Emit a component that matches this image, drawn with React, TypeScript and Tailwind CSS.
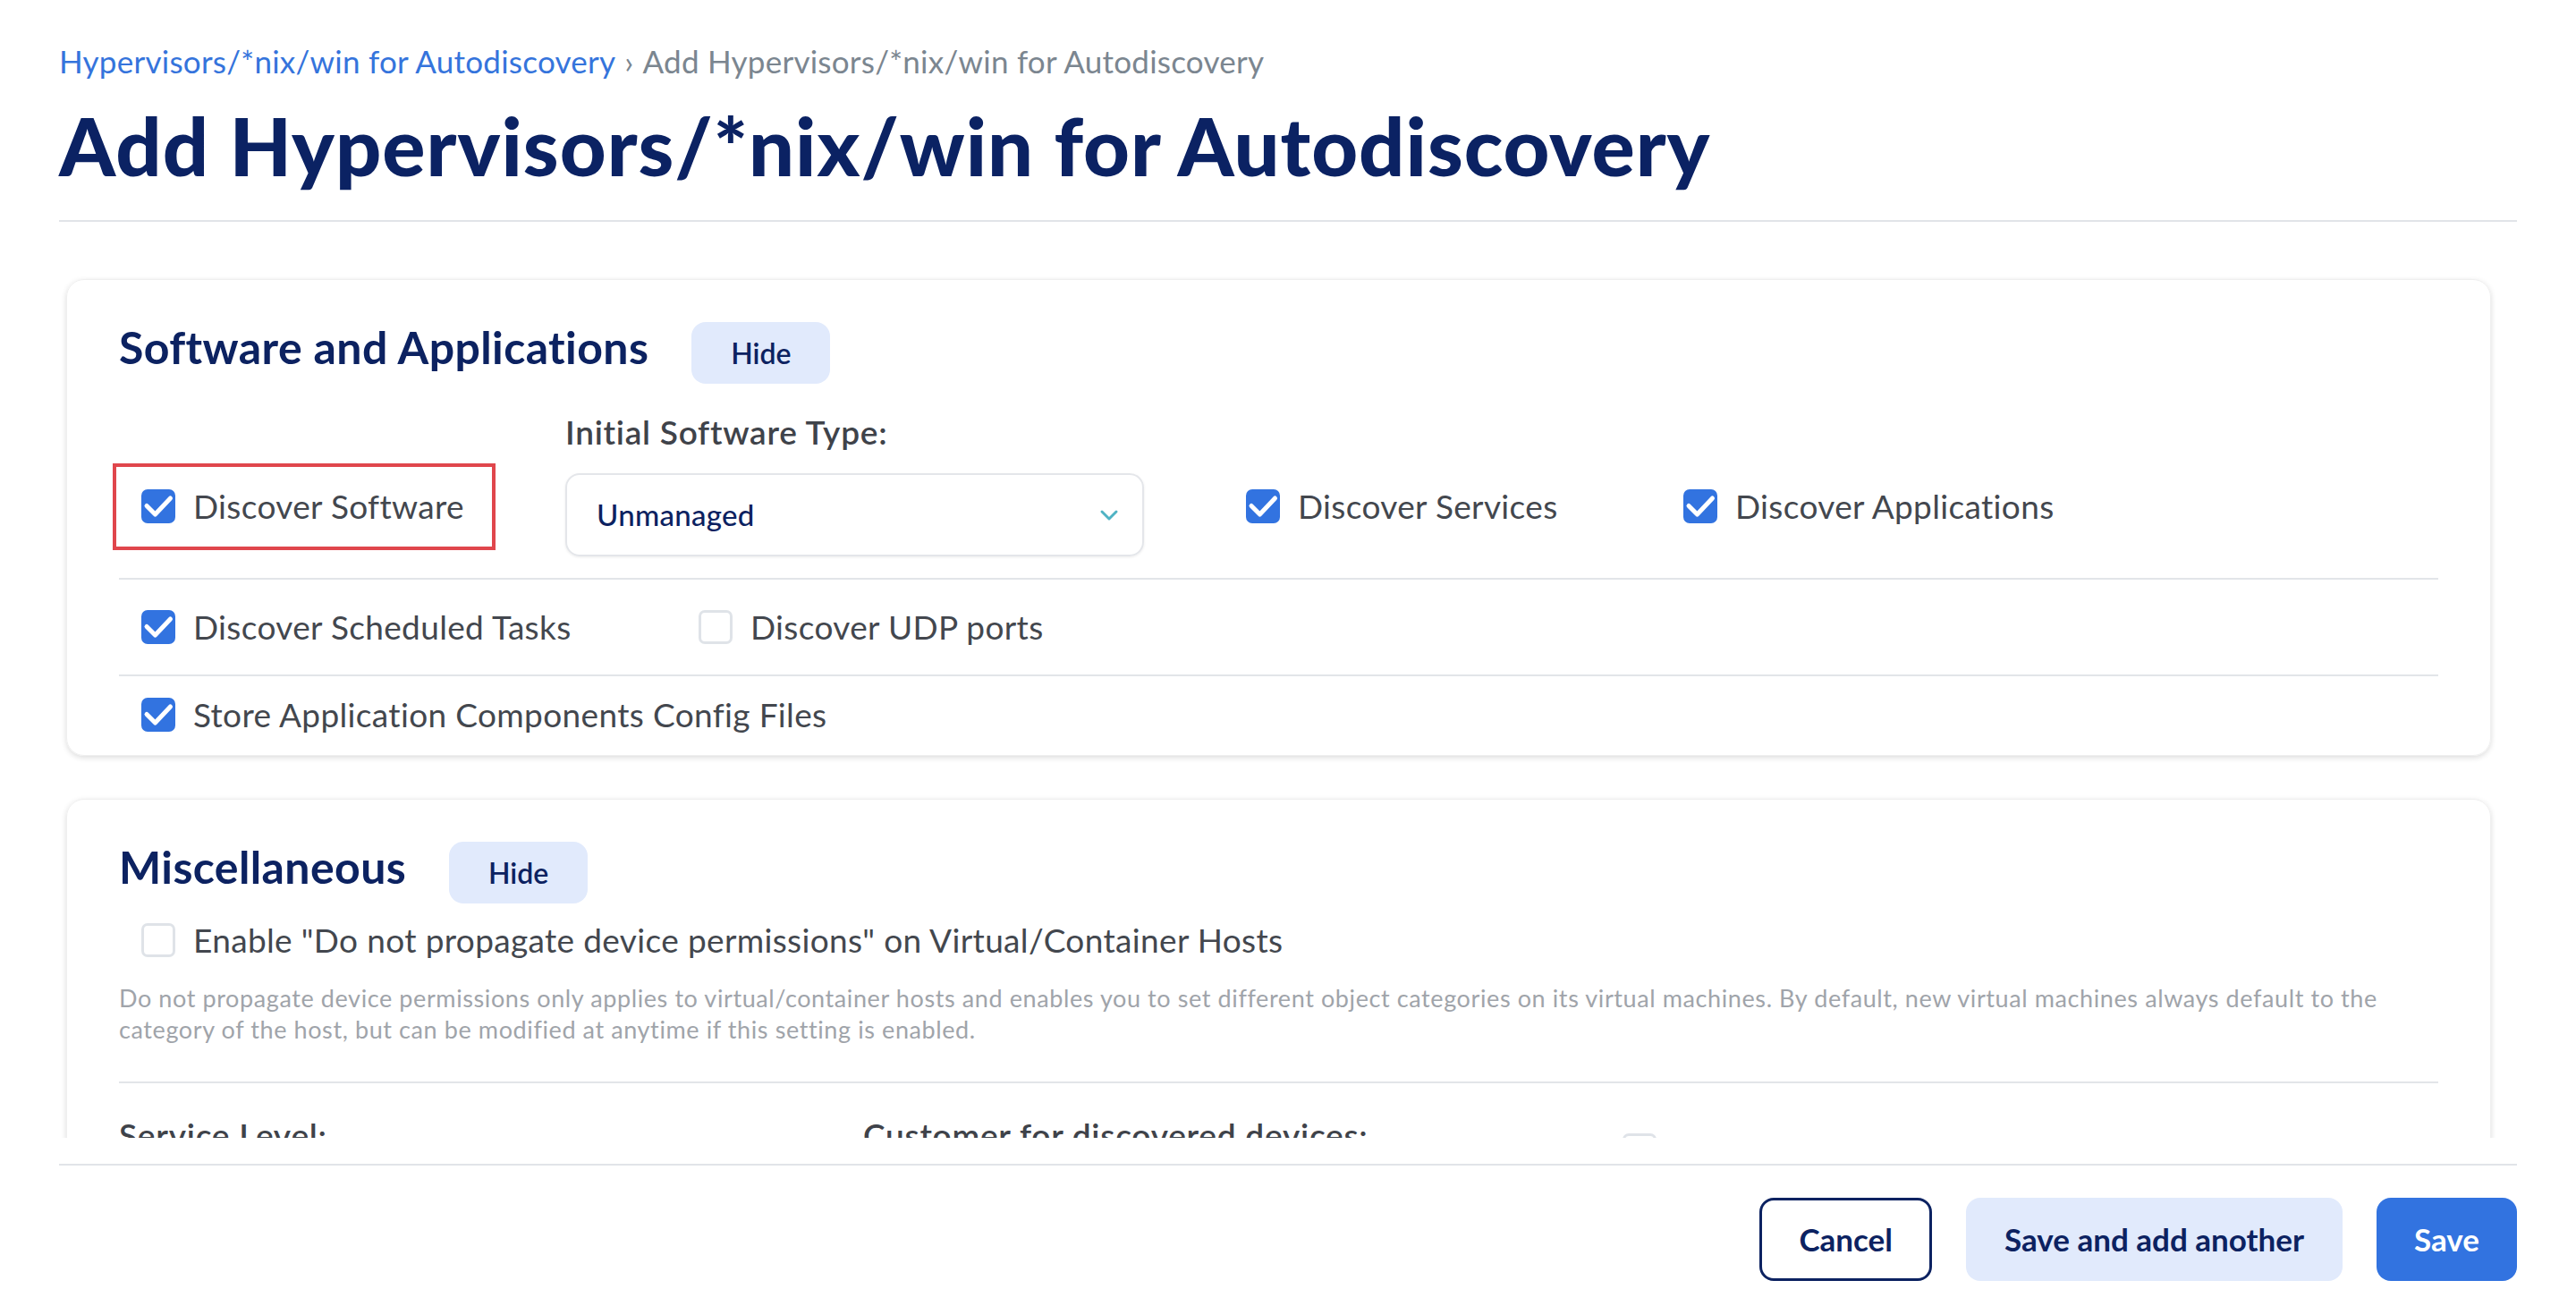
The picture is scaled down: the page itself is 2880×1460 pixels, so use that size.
import React from "react";

function CheckBox({ checked }: { checked: boolean }) {
  if (!checked) {
    return <span className="block w-[38px] h-[38px] shrink-0 rounded-[7px] border-[3px] border-[#dfe3e8] bg-white" />;
  }
  return (
    <span className="block w-[38px] h-[38px] shrink-0 rounded-[7px] bg-[#3273e0]">
      <svg width="38" height="38" viewBox="0 0 38 38" fill="none">
        <path d="M6 18.5l9.5 9.5L32.5 10" stroke="white" strokeWidth="5" strokeLinecap="round" strokeLinejoin="round" />
      </svg>
    </span>
  );
}

function CheckItem({ label, checked, className = "" }: { label: string; checked: boolean; className?: string }) {
  return (
    <label className={`flex items-center gap-[20px] h-[44px] text-[37px] leading-[44px] tracking-[0.35px] text-[#43474e] ${className}`}>
      <CheckBox checked={checked} />
      <span className="whitespace-nowrap">{label}</span>
    </label>
  );
}

function SectionHead({ title }: { title: string }) {
  return (
    <div className="flex items-start gap-[48px]">
      <h2 className="text-[50px] leading-[56px] font-bold tracking-[0.4px] text-[#0c2261]">{title}</h2>
      <button className="w-[155px] h-[69px] rounded-[16px] bg-[#e1eafc] text-[32px] font-semibold text-[#0c2261]">
        Hide
      </button>
    </div>
  );
}

export default function App() {
  return (
    <div className="h-[1460px] flex flex-col px-[66px] bg-white font-['Lato','Liberation_Sans',sans-serif] overflow-hidden">
      {/* header */}
      <div className="pt-[48px]">
        <div className="text-[35px] leading-[41px] tracking-[0.25px] whitespace-nowrap">
          <a className="text-[#3574dc]">Hypervisors/*nix/win for Autodiscovery</a>
          <span className="text-[#7b8690] mx-[10px]">›</span>
          <span className="text-[#7b8690]">Add Hypervisors/*nix/win for Autodiscovery</span>
        </div>
        <h1 className="mt-[19px] text-[90px] leading-[108px] font-black tracking-[1px] text-[#0b2263] whitespace-nowrap">
          Add Hypervisors/*nix/win for Autodiscovery
        </h1>
        <div className="mt-[30px] h-[2px] bg-[#e1e4e8]" />
      </div>

      {/* scrolling form */}
      <div className="flex-1 overflow-hidden pt-[64px] pl-[8px] pr-[29px]">
        <section className="rounded-[20px] border border-[#efefef] shadow-[0_2px_6px_rgba(0,0,0,0.14)] px-[58px] pt-[47px]">
          <SectionHead title="Software and Applications" />

          <div className="flex items-start mt-[31px] pl-[25px]">
            <div className="relative mt-[84px] w-[474px]">
              <CheckItem label="Discover Software" checked />
              <div className="absolute left-[-32px] top-[-26px] w-[428px] h-[97px] border-[4px] border-[#e0464c] pointer-events-none" />
            </div>
            <div className="w-[761px]">
              <div className="text-[37px] leading-[45px] font-semibold tracking-[0.75px] text-[#3f434a]">Initial Software Type:</div>
              <div className="mt-[24px] w-[647px] h-[93px] rounded-[16px] border-2 border-[#e4e6ea] shadow-[0_1px_3px_rgba(0,0,0,0.08)] flex items-center justify-between pl-[33px] pr-[26px]">
                <span className="text-[33px] font-medium tracking-[0.3px] text-[#0c2261]">Unmanaged</span>
                <svg width="22" height="16" viewBox="0 0 22 16" fill="none">
                  <path d="M3 4l8 8 8-8" stroke="#4fb3c4" strokeWidth="3" strokeLinecap="round" strokeLinejoin="round" />
                </svg>
              </div>
            </div>
            <CheckItem label="Discover Services" checked className="mt-[84px] w-[489px]" />
            <CheckItem label="Discover Applications" checked className="mt-[84px]" />
          </div>

          <div className="mt-[24px] h-[2px] bg-[#e2e5e9]" />
          <div className="flex items-center py-[31px] pl-[25px]">
            <CheckItem label="Discover Scheduled Tasks" checked className="w-[623px]" />
            <CheckItem label="Discover UDP ports" checked={false} />
          </div>
          <div className="h-[2px] bg-[#e2e5e9]" />
          <div className="pt-[21px] pb-[23px] pl-[25px]">
            <CheckItem label="Store Application Components Config Files" checked />
          </div>
        </section>

        <section className="mt-[48px] rounded-[20px] border border-[#efefef] shadow-[0_2px_6px_rgba(0,0,0,0.14)] px-[58px] pt-[47px] pb-[60px]">
          <SectionHead title="Miscellaneous" />
          <CheckItem
            label={'Enable "Do not propagate device permissions" on Virtual/Container Hosts'}
            checked={false}
            className="mt-[19px] ml-[25px]"
          />
          <p className="mt-[25px] text-[27px] leading-[35px] tracking-[0.6px] text-[#a0a4aa]">
            Do not propagate device permissions only applies to virtual/container hosts and enables you to set different object categories on its virtual machines. By default, new virtual machines always default to the category of the host, but can be modified at anytime if this setting is enabled.
          </p>
          <div className="mt-[41px] h-[2px] bg-[#e2e5e9]" />
          <div className="flex items-start mt-[35px]">
            <div className="w-[832px] text-[37px] leading-[45px] font-semibold tracking-[0.75px] text-[#3f434a]">Service Level:</div>
            <div className="w-[849px] text-[37px] leading-[45px] font-semibold tracking-[0.75px] text-[#3f434a]">Customer for discovered devices:</div>
            <span className="mt-[21px] block w-[38px] h-[38px] rounded-[7px] border-[3px] border-[#dfe3e8]" />
          </div>
        </section>
      </div>

      {/* footer */}
      <div className="mt-[29px] border-t-2 border-[#e1e4e8] pt-[36px] pb-[28px] flex justify-end gap-[38px]">
        <button className="h-[93px] px-[41px] rounded-[16px] border-[3px] border-[#0c2261] text-[35px] font-bold text-[#0c2261]">
          Cancel
        </button>
        <button className="h-[93px] px-[43px] rounded-[16px] bg-[#e1eafc] text-[35px] font-bold text-[#0c2261]">
          Save and add another
        </button>
        <button className="h-[93px] px-[42px] rounded-[16px] bg-[#3273e0] text-[35px] font-bold text-white">
          Save
        </button>
      </div>
    </div>
  );
}
